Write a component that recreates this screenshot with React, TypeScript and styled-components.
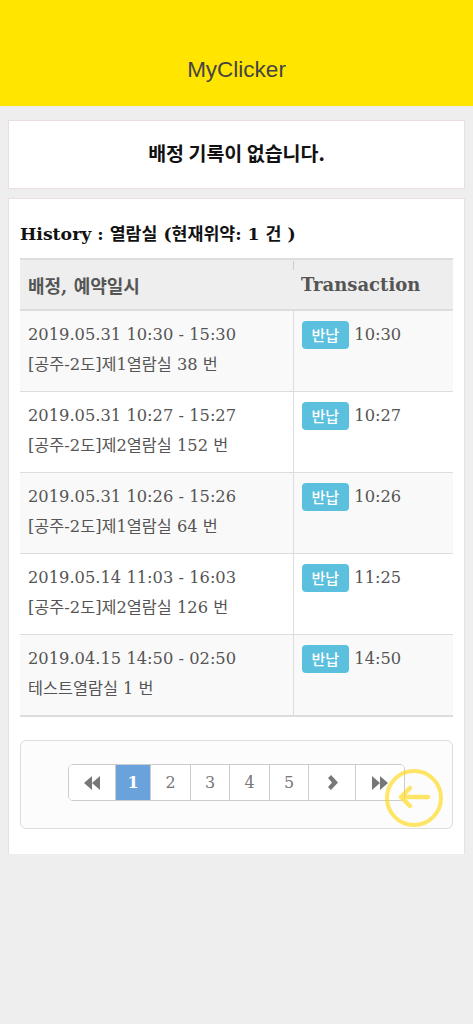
import React from "react";
import styled, { createGlobalStyle } from "styled-components";

const GlobalStyle = createGlobalStyle`
  html, body {
    margin: 0;
    padding: 0;
    background: #eeeeee;
  }
  * {
    box-sizing: border-box;
  }
`;

const Page = styled.div`
  min-height: 1024px;
  background: #eeeeee;
  font-family: "DejaVu Serif", "Noto Sans CJK KR", serif;
`;

const Header = styled.header`
  height: 106px;
  background: #ffe500;
  padding-top: 56px;
  text-align: center;
`;

const AppTitle = styled.h1`
  margin: 0;
  font-family: "Liberation Sans", "Noto Sans", sans-serif;
  font-size: 22.5px;
  line-height: 28px;
  font-weight: normal;
  color: #444;
`;

const Main = styled.main`
  padding: 14px 8px 0;
  display: flex;
  flex-direction: column;
  gap: 9px;
`;

const Card = styled.section`
  background: #fff;
  border: 1px solid #ecdede;
`;

const Notice = styled(Card)`
  height: 69px;
  display: flex;
  align-items: center;
  justify-content: center;
  font-family: "Noto Sans CJK KR", sans-serif;
  font-size: 19.5px;
  font-weight: bold;
  color: #111;
  padding-bottom: 4px;
`;

const HistoryCard = styled(Card)`
  border-bottom: none;
  padding: 22px 11px 25px;
`;

const HistoryTitle = styled.h2`
  margin: 0 0 11px;
  font-size: 17.3px;
  line-height: 26px;
  font-weight: bold;
  color: #111;
`;

const Table = styled.table`
  width: 100%;
  border-collapse: collapse;
  border-bottom: 2px solid #ddd;
  table-layout: fixed;
`;

const HeadCell = styled.th<{ $first?: boolean }>`
  position: relative;
  background: #eeeeee;
  border-top: 2px solid #ddd;
  border-bottom: 2px solid #ddd;
  height: 51px;
  padding: 0 8px;
  text-align: left;
  font-size: 18px;
  font-weight: bold;
  color: #555;
  &::before {
    content: "";
    display: ${(p) => (p.$first ? "none" : "block")};
    position: absolute;
    left: 0;
    top: 1px;
    width: 1px;
    height: 9px;
    background: #ccc;
  }
`;

const Row = styled.tr<{ $striped: boolean }>`
  background: ${(p) => (p.$striped ? "#f9f9f9" : "#fff")};
`;

const Cell = styled.td<{ $first?: boolean }>`
  border-top: 1px solid #ddd;
  border-left: ${(p) => (p.$first ? "none" : "1px solid #ddd")};
  padding: 9px 8px 11px;
  vertical-align: top;
  font-size: 16.3px;
  line-height: 30px;
  color: #555;
`;

const Line = styled.div`
  white-space: nowrap;
`;

const Badge = styled.span`
  display: inline-block;
  height: 28px;
  padding: 0 10px;
  margin-top: 1px;
  border-radius: 4px;
  background: #5bc0de;
  color: #fff;
  font-family: "Noto Sans CJK KR", sans-serif;
  font-size: 15px;
  font-weight: 500;
  line-height: 28px;
  vertical-align: top;
`;

const Well = styled.div`
  margin-top: 23px;
  height: 89px;
  background: #fcfcfc;
  border: 1px solid #ddd;
  border-radius: 6px;
  display: flex;
  align-items: center;
  justify-content: center;
  padding-bottom: 4px;
`;

const Pager = styled.ul`
  display: flex;
  margin: 0;
  padding: 0;
  list-style: none;
  border: 1px solid #ccc;
  border-radius: 5px;
  overflow: hidden;
  background: #fff;
`;

const PageItem = styled.li<{ $active?: boolean; $width: number }>`
  width: ${(p) => p.$width}px;
  height: 35px;
  display: flex;
  align-items: center;
  justify-content: center;
  border-left: 1px solid #ccc;
  background: ${(p) => (p.$active ? "#6aa3dc" : "#fff")};
  color: ${(p) => (p.$active ? "#fff" : "#777")};
  font-size: 16px;
  font-weight: ${(p) => (p.$active ? "bold" : "normal")};
  &:first-child {
    border-left: none;
  }
`;

const FloatButton = styled.button`
  position: fixed;
  left: 385px;
  top: 769px;
  width: 58px;
  height: 58px;
  padding: 0;
  border: none;
  background: transparent;
  cursor: pointer;
`;

const Backward = () => (
  <svg width="16" height="14" viewBox="0 0 16 14">
    <path d="M8 0 L8 14 L0 7 Z M16 0 L16 14 L8 7 Z" fill="#777" />
  </svg>
);

const Forward = () => (
  <svg width="16" height="14" viewBox="0 0 16 14">
    <path d="M0 0 L8 7 L0 14 Z M8 0 L16 7 L8 14 Z" fill="#777" />
  </svg>
);

const ChevronRight = () => (
  <svg width="11" height="15" viewBox="0 0 11 15">
    <path d="M1 3 L4 0 L11 7.5 L4 15 L1 12 L5 7.5 Z" fill="#777" />
  </svg>
);

const BackArrow = () => (
  <svg width="58" height="58" viewBox="0 0 58 58">
    <circle cx="29" cy="29" r="27" fill="none" stroke="rgba(255,214,0,0.6)" strokeWidth="4" />
    <path
      d="M17 28 L43 28 M25 19 L16 28 L25 37"
      fill="none"
      stroke="rgba(255,214,0,0.6)"
      strokeWidth="4.5"
      strokeLinecap="round"
      strokeLinejoin="round"
    />
  </svg>
);

const history = [
  { span: "2019.05.31 10:30 - 15:30", seat: "[공주-2도]제1열람실 38 번", time: "10:30" },
  { span: "2019.05.31 10:27 - 15:27", seat: "[공주-2도]제2열람실 152 번", time: "10:27" },
  { span: "2019.05.31 10:26 - 15:26", seat: "[공주-2도]제1열람실 64 번", time: "10:26" },
  { span: "2019.05.14 11:03 - 16:03", seat: "[공주-2도]제2열람실 126 번", time: "11:25" },
  { span: "2019.04.15 14:50 - 02:50", seat: "테스트열람실 1 번", time: "14:50" },
];

const App: React.FC = () => {
  return (
    <Page>
      <GlobalStyle />
      <Header>
        <AppTitle>MyClicker</AppTitle>
      </Header>
      <Main>
        <Notice>배정 기록이 없습니다.</Notice>
        <HistoryCard>
          <HistoryTitle>History : 열람실 (현재위약: 1 건 )</HistoryTitle>
          <Table>
            <colgroup>
              <col style={{ width: 273 }} />
              <col />
            </colgroup>
            <thead>
              <tr>
                <HeadCell $first>배정, 예약일시</HeadCell>
                <HeadCell>Transaction</HeadCell>
              </tr>
            </thead>
            <tbody>
              {history.map((h, i) => (
                <Row key={h.span} $striped={i % 2 === 0}>
                  <Cell $first>
                    <Line>{h.span}</Line>
                    <Line>{h.seat}</Line>
                  </Cell>
                  <Cell>
                    <Line>
                      <Badge>반납</Badge> {h.time}
                    </Line>
                  </Cell>
                </Row>
              ))}
            </tbody>
          </Table>
          <Well>
            <Pager>
              <PageItem $width={46}>
                <Backward />
              </PageItem>
              <PageItem $width={35} $active>
                1
              </PageItem>
              <PageItem $width={40}>2</PageItem>
              <PageItem $width={39}>3</PageItem>
              <PageItem $width={40}>4</PageItem>
              <PageItem $width={39}>5</PageItem>
              <PageItem $width={47}>
                <ChevronRight />
              </PageItem>
              <PageItem $width={49}>
                <Forward />
              </PageItem>
            </Pager>
          </Well>
        </HistoryCard>
      </Main>
      <FloatButton aria-label="뒤로">
        <BackArrow />
      </FloatButton>
    </Page>
  );
};

export default App;
